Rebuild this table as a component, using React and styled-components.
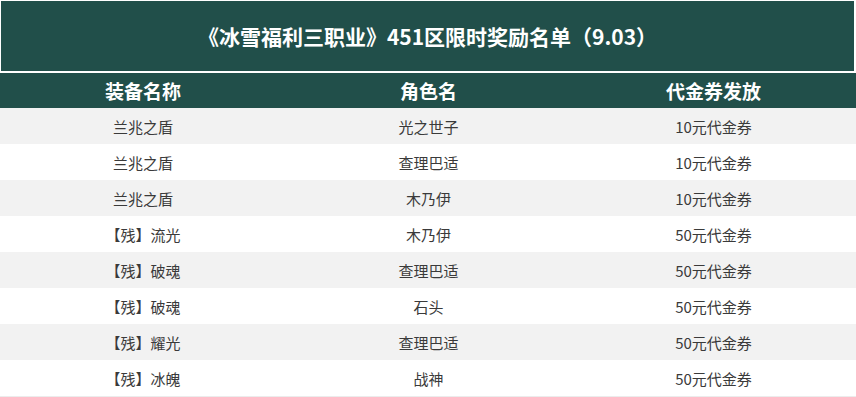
import React from "react";
import styled, { createGlobalStyle } from "styled-components";

const Global = createGlobalStyle`
  html, body { margin: 0; padding: 0; background: #ffffff; }
  body { font-family: "Noto Sans CJK SC", "Noto Sans", sans-serif; }
`;

const Page = styled.div`
  width: 856px;
  display: flex;
  flex-direction: column;
`;

const TitleBar = styled.div`
  margin: 1px 2px 2px 1px;
  height: 70px;
  background: #214f4a;
  color: #ffffff;
  font-size: 21px;
  font-weight: 700;
  display: flex;
  align-items: center;
  justify-content: center;
`;

const Table = styled.div`
  display: flex;
  flex-direction: column;
  border-bottom: 1px solid #ececec;
`;

const Row = styled.div`
  display: grid;
  grid-template-columns: 286px 285px 285px;
  height: ${(p) => (p.$head ? 35 : 36)}px;
  background: ${(p) => (p.$head ? "#214f4a" : p.$alt ? "#f2f2f2" : "#ffffff")};
`;

const Cell = styled.div`
  display: flex;
  align-items: center;
  justify-content: center;
  color: ${(p) => (p.$head ? "#ffffff" : "#3a3a3a")};
  font-size: ${(p) => (p.$head ? 19 : 15)}px;
  font-weight: ${(p) => (p.$head ? 700 : 400)};
`;

const rows = [
  ["兰兆之盾", "光之世子", "10元代金券"],
  ["兰兆之盾", "查理巴适", "10元代金券"],
  ["兰兆之盾", "木乃伊", "10元代金券"],
  ["【残】流光", "木乃伊", "50元代金券"],
  ["【残】破魂", "查理巴适", "50元代金券"],
  ["【残】破魂", "石头", "50元代金券"],
  ["【残】耀光", "查理巴适", "50元代金券"],
  ["【残】冰魄", "战神", "50元代金券"],
];

export default function App() {
  return (
    <Page>
      <Global />
      <TitleBar>《冰雪福利三职业》451区限时奖励名单（9.03）</TitleBar>
      <Table>
        <Row $head>
          <Cell $head>装备名称</Cell>
          <Cell $head>角色名</Cell>
          <Cell $head>代金券发放</Cell>
        </Row>
        {rows.map((r, i) => (
          <Row key={i} $alt={i % 2 === 0}>
            {r.map((c, j) => (
              <Cell key={j}>{c}</Cell>
            ))}
          </Row>
        ))}
      </Table>
    </Page>
  );
}
